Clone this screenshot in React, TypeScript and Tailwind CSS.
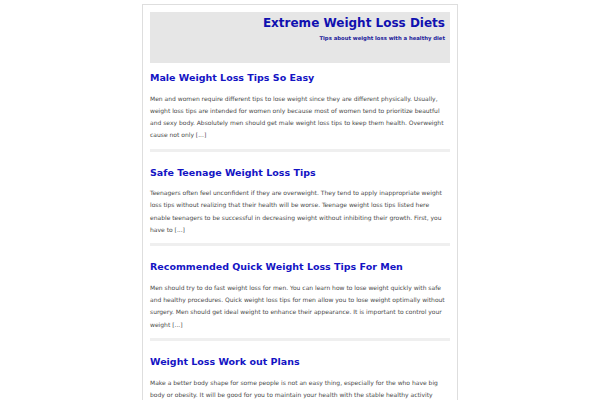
import React from "react";

const posts = [
  {
    title: "Male Weight Loss Tips So Easy",
    body: "Men and women require different tips to lose weight since they are different physically. Usually, weight loss tips are intended for women only because most of women tend to prioritize beautful and sexy body. Absolutely men should get male weight loss tips to keep them health. Overweight cause not only [...]",
  },
  {
    title: "Safe Teenage Weight Loss Tips",
    body: "Teenagers often feel unconfident if they are overweight. They tend to apply inappropriate weight loss tips without realizing that their health will be worse. Teenage weight loss tips listed here enable teenagers to be successful in decreasing weight without inhibiting their growth. First, you have to [...]",
  },
  {
    title: "Recommended Quick Weight Loss Tips For Men",
    body: "Men should try to do fast weight loss for men. You can learn how to lose weight quickly with safe and healthy procedures. Quick weight loss tips for men allow you to lose weight optimally without surgery. Men should get ideal weight to enhance their appearance. It is important to control your weight [...]",
  },
  {
    title: "Weight Loss Work out Plans",
    body: "Make a better body shape for some people is not an easy thing, especially for the who have big body or obesity. It will be good for you to maintain your health with the stable healthy activity and diet program for your body. [...]",
  },
];

export default function App() {
  return (
    <div
      className="h-[400px] w-[600px] overflow-hidden bg-white"
      style={{ fontFamily: '"DejaVu Sans", Verdana, sans-serif' }}
    >
      <div className="mx-auto mt-[4px] w-[316px] border border-[#dedede] px-[7px] pt-[7px]">
        <div className="flex h-[51px] flex-col items-end bg-[#e6e6e6] pr-[5px] pt-[2px]">
          <div className="text-[12px] font-bold leading-[18px] text-[#1010b0]">
            Extreme Weight Loss Diets
          </div>
          <div className="mt-[2px] text-[5.3px] font-bold leading-[8px] text-[#20209a]">
            Tips about weight loss with a healthy diet
          </div>
        </div>
        {posts.map((p, i) => (
          <div
            key={i}
            className={`border-b-[3px] border-[#efefef] pb-[7px] ${i === 0 ? "pt-[8px]" : "pt-[14px]"}`}
          >
            <div className="text-[9.5px] font-bold leading-[14px] text-[#1414c4]">
              {p.title}
            </div>
            <div
              className={`mt-[7.5px] text-[6px] leading-[12.3px] text-[#4a4a4a] ${i === 3 ? "pr-[8px]" : ""}`}
            >
              {p.body}
            </div>
          </div>
        ))}
      </div>
    </div>
  );
}
